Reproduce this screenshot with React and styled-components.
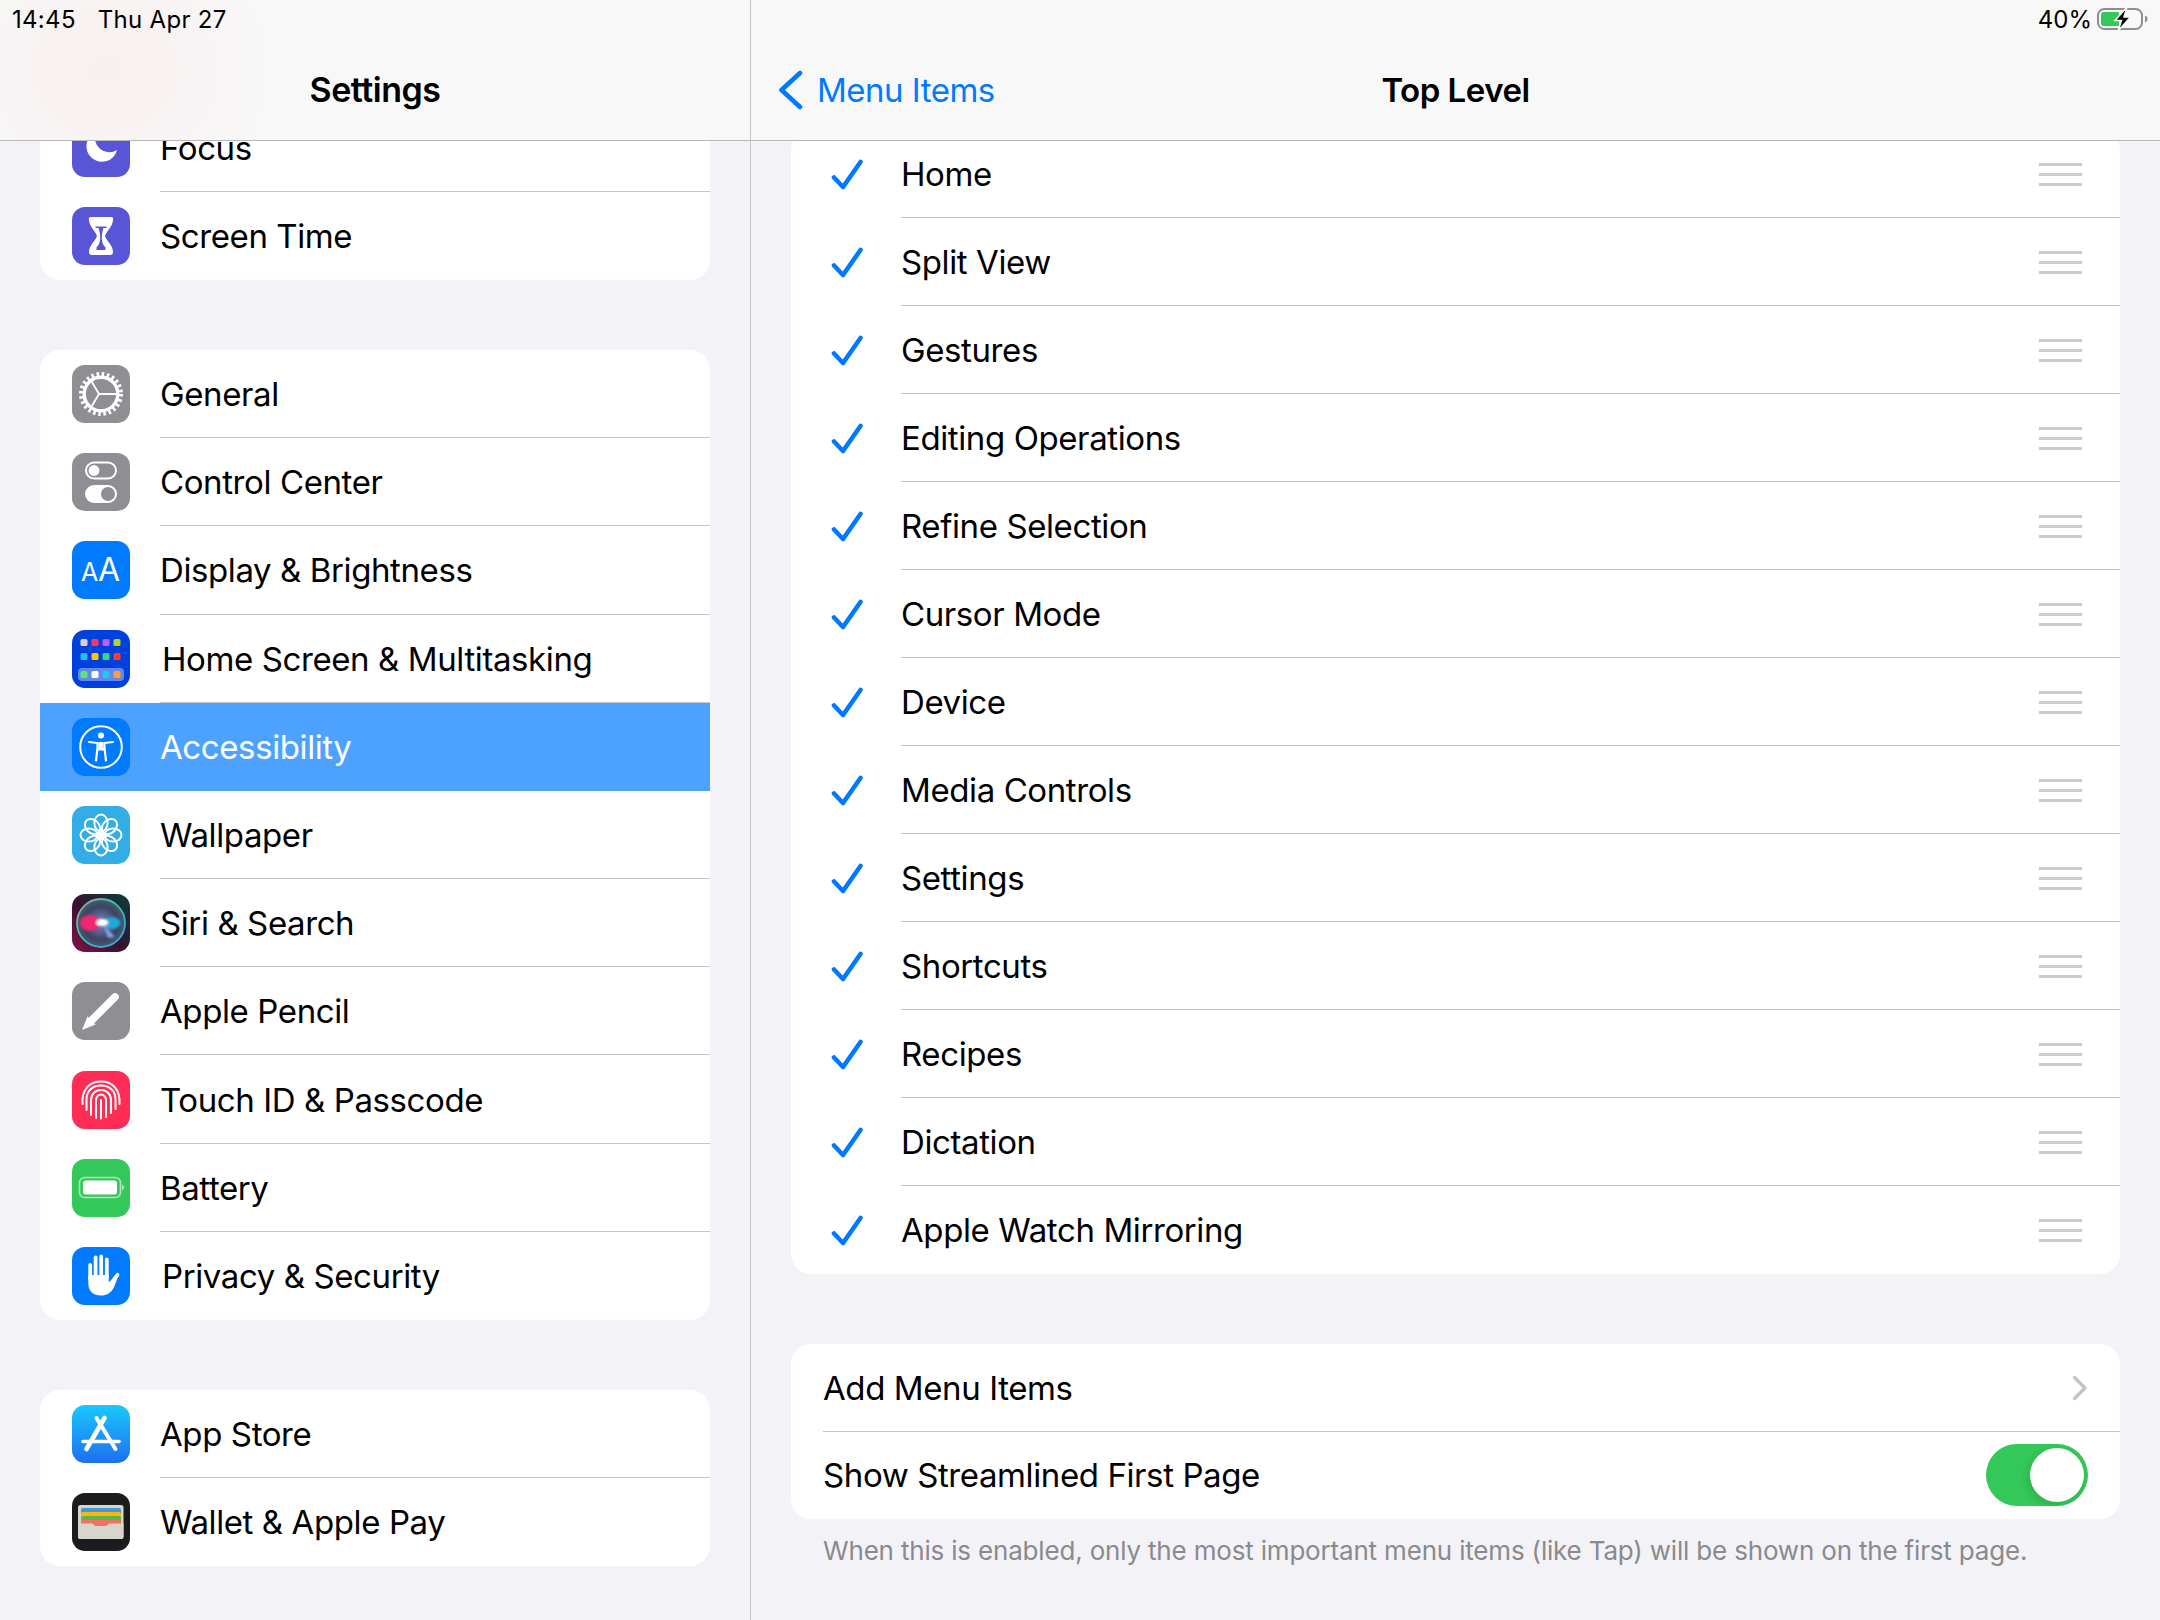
import React from 'react'
import styled, {createGlobalStyle} from 'styled-components';

const BLUE = '#007aff';
const GRAY_TILE = '#8e8e93';

const Dot = ({x, y, color}) => <rect x={x} y={y} width="7" height="7" rx="1.6" fill={color}/>;

const HOME_DOTS = [
    ['#d8d4c8', '#ff375f', '#bf5af2', '#b5d334'],
    ['#1fc0f5', '#ffc400', '#30d98f', '#ff3b30'],
    ['#5ce66d', '#ffffff', '#20c8f5', '#ff9f38'],
];
const HOME_DOT_ROWS = [9, 23, 41];
const DOT_COLUMNS = [8.5, 19.5, 30.5, 41.5];
const PETALS = [0, 45, 90, 135, 180, 225, 270, 315];

const ICONS = {
    focus: {
        bg: '#5856d6',
        art: <path d="M24 13A15.5 15.5 0 1 0 45 31A14.5 14.5 0 0 1 24 13Z" fill="#fff"/>,
    },
    screenTime: {
        bg: '#5856d6',
        art: (
            <>
                <path d="M19 10H39C41 10 41.5 11 41 13C40.5 20 34.5 24 33 29C34.5 34 41 38 41 45C41 47 40 48 38 48H20C18 48 17 47 17 45C17 38 23.5 34 25 29C23.5 24 17.5 20 17 13C16.5 11 17 10 19 10Z" fill="#fff"/>
                <path d="M23.5 19.5H34.5V21H31.5C30.5 24 29.8 27 29.8 31C29.8 35 31 38 33.5 40.5V43H24.5V40.5C27 38 28.2 35 28.2 31C28.2 27 27.5 24 26.5 21H23.5Z" fill="#5856d6"/>
            </>
        ),
    },
    general: {
        bg: GRAY_TILE,
        art: (
            <g fill="none" stroke="#fff">
                <circle cx="29" cy="29" r="20" strokeWidth="4" strokeDasharray="2.6 2.64"/>
                <circle cx="29" cy="29" r="16.8" strokeWidth="3.4"/>
                <path d="M27 29H45M27 29L19 15.5M27 29L19 42.5" strokeWidth="1.8"/>
            </g>
        ),
    },
    control: {
        bg: GRAY_TILE,
        art: (
            <>
                <rect x="14" y="9.5" width="30" height="16" rx="8" fill="none" stroke="#fff" strokeWidth="2"/>
                <circle cx="22" cy="17.5" r="5.4" fill="#fff"/>
                <rect x="13" y="32" width="32" height="18" rx="9" fill="#fff"/>
                <circle cx="36" cy="41" r="7" fill={GRAY_TILE}/>
            </>
        ),
    },
    display: {
        bg: BLUE,
        art: (
            <g fill="#fff" fontFamily="Inter, sans-serif">
                <text x="9" y="40" fontSize="25">A</text>
                <text x="26" y="40" fontSize="32">A</text>
            </g>
        ),
    },
    home: {
        bg: '#0040dd',
        art: (
            <>
                <rect x="6" y="38" width="46" height="13" rx="4" fill="#fff" opacity="0.38"/>
                {HOME_DOTS.map((row, rowIndex) => row.map((color, colIndex) => (
                    <Dot key={`${rowIndex}-${colIndex}`} x={DOT_COLUMNS[colIndex]} y={HOME_DOT_ROWS[rowIndex]} color={color}/>
                )))}
            </>
        ),
    },
    accessibility: {
        bg: BLUE,
        art: (
            <g fill="none" stroke="#fff">
                <circle cx="29" cy="29" r="20.8" strokeWidth="2"/>
                <circle cx="29" cy="17.5" r="3" fill="#fff" stroke="none"/>
                <path d="M17 24L25.5 25V30L24 42.5M41 24L32.5 25V30L34 42.5M25.5 31.5H32.5" strokeWidth="2.2" strokeLinecap="round" strokeLinejoin="round"/>
                <path d="M26.5 24H31.5V32H26.5Z" fill="#fff" stroke="none"/>
            </g>
        ),
    },
    wallpaper: {
        bg: '#32ade6',
        art: (
            <g fill="none" stroke="#fff" strokeWidth="2">
                {PETALS.map(angle => (
                    <ellipse key={angle} cx="29" cy="17" rx="6.6" ry="8.5" transform={`rotate(${angle} 29 29)`}/>
                ))}
                <circle cx="29" cy="29" r="3" fill="#fff" stroke="none"/>
            </g>
        ),
    },
    siri: {
        bg: 'linear-gradient(45deg, #8a1048 0%, #3a1030 45%, #0b3d3c 100%)',
        art: (
            <>
                <defs>
                    <linearGradient id="siriRing" x1="0" y1="0" x2="1" y2="1">
                        <stop offset="0" stopColor="#a9a0a8"/>
                        <stop offset="0.4" stopColor="#35c79a"/>
                        <stop offset="1" stopColor="#2f9df4"/>
                    </linearGradient>
                    <radialGradient id="siriOrb" cx="0.5" cy="0.5" r="0.5">
                        <stop offset="0" stopColor="#7a86c8"/>
                        <stop offset="0.7" stopColor="#3a4560"/>
                        <stop offset="1" stopColor="#4a5a70"/>
                    </radialGradient>
                    <filter id="siriBlur" x="-30%" y="-30%" width="160%" height="160%">
                        <feGaussianBlur stdDeviation="1.2"/>
                    </filter>
                </defs>
                <circle cx="29" cy="29" r="24" fill="url(#siriOrb)" stroke="url(#siriRing)" strokeWidth="1.8"/>
                <g filter="url(#siriBlur)">
                    <ellipse cx="18" cy="29" rx="10" ry="8" fill="#f0266e"/>
                    <ellipse cx="40" cy="29" rx="8.500" ry="6" fill="#20a8d8"/>
                    <path d="M31 30L43 43L36 44Z" fill="#7fa0e0"/>
                    <ellipse cx="30" cy="28.500" rx="6" ry="3.600" fill="#fff"/>
                </g>
                <circle cx="30.500" cy="28.500" r="2.400" fill="#fff"/>
            </>
        ),
    },
    pencil: {
        bg: GRAY_TILE,
        art: (
            <>
                <path d="M19.5 38.5L43 15" stroke="#fff" strokeWidth="7.6" strokeLinecap="round"/>
                <path d="M15.5 34.5L23.5 42.5L10 48Z" fill="#fff"/>
            </>
        ),
    },
    touch: {
        bg: '#ff2d55',
        art: (
            <g fill="none" stroke="#fff" strokeWidth="2" strokeLinecap="round">
                <path d="M10.5 33C9.5 18 18 10.5 29 10.5C40 10.5 48.5 18 47.5 33"/>
                <path d="M14.5 39V28C14.5 20 20.5 14.5 29 14.5C37.5 14.5 43.5 20 43.5 28V38"/>
                <path d="M19 44V29C19 23 23.5 19 29 19C34.5 19 39 23 39 29V42"/>
                <path d="M24 47V29C24 26 26.3 23.5 29 23.5C31.7 23.5 34 26 34 29V46"/>
                <path d="M29 29V47.5"/>
            </g>
        ),
    },
    battery: {
        bg: '#34c759',
        art: (
            <>
                <rect x="7.5" y="18.5" width="41" height="20" rx="5" fill="none" stroke="#fff" strokeOpacity="0.6" strokeWidth="1.6"/>
                <rect x="11" y="21.5" width="34" height="14" rx="2.5" fill="#fff"/>
                <path d="M50 25L52.5 28.5L50 32Z" fill="#fff" opacity="0.6"/>
            </>
        ),
    },
    privacy: {
        bg: BLUE,
        art: (
            <>
                <g stroke="#fff" strokeWidth="3.8" strokeLinecap="round">
                    <path d="M18.2 18V32M23.6 10.5V30M29.2 9.5V30M34.8 12.5V30"/>
                    <path d="M38.5 37L45.5 27.8"/>
                </g>
                <path d="M16.3 28H36.7V34L39.5 36.5L46 29C43 38 41 48.5 29 48.5C20 48.5 16.3 43 16.3 36Z" fill="#fff"/>
            </>
        ),
    },
    appStore: {
        bg: 'linear-gradient(180deg, #1ac8fc 0%, #1d6ff2 100%)',
        art: (
            <g stroke="#fff" strokeLinecap="round" fill="none">
                <path d="M32.5 13L14.5 44" strokeWidth="4.6"/>
                <path d="M24.5 13L43.5 44" strokeWidth="4"/>
                <path d="M11 36.5H47" strokeWidth="3.6"/>
            </g>
        ),
    },
    wallet: {
        bg: '#1c1c1e',
        art: (
            <>
                <rect x="6" y="12" width="45.5" height="34" rx="2.5" fill="#d8d6cc"/>
                <rect x="9" y="15" width="40" height="10" rx="2" fill="#3f9ad6"/>
                <rect x="9" y="19" width="40" height="10" rx="2" fill="#ffb40f"/>
                <rect x="9" y="23" width="40" height="10" rx="2" fill="#54b948"/>
                <rect x="9" y="27" width="40" height="6" rx="2" fill="#f47064"/>
                <path d="M6 30.5H19C23 30.5 23 36 28.75 36C34.5 36 34.5 30.5 38.5 30.5H51.5V43.5C51.5 45 50.5 46 49 46H8.5C7 46 6 45 6 43.5Z" fill="#d8d6cc"/>
            </>
        ),
    },
};

const TOP_GROUP = [
    {label: 'Focus', icon: 'focus'},
    {label: 'Screen Time', icon: 'screenTime'},
];
const MIDDLE_GROUP = [
    {label: 'General', icon: 'general'},
    {label: 'Control Center', icon: 'control'},
    {label: 'Display & Brightness', icon: 'display'},
    {label: 'Home Screen & Multitasking', icon: 'home', shifted: true},
    {label: 'Accessibility', icon: 'accessibility', selected: true},
    {label: 'Wallpaper', icon: 'wallpaper'},
    {label: 'Siri & Search', icon: 'siri'},
    {label: 'Apple Pencil', icon: 'pencil'},
    {label: 'Touch ID & Passcode', icon: 'touch'},
    {label: 'Battery', icon: 'battery'},
    {label: 'Privacy & Security', icon: 'privacy', shifted: true},
];
const BOTTOM_GROUP = [
    {label: 'App Store', icon: 'appStore'},
    {label: 'Wallet & Apple Pay', icon: 'wallet'},
];
const MENU_ITEMS = [
    'Home', 'Split View', 'Gestures', 'Editing Operations', 'Refine Selection', 'Cursor Mode', 'Device',
    'Media Controls', 'Settings', 'Shortcuts', 'Recipes', 'Dictation', 'Apple Watch Mirroring',
];

function SettingsGroup({items}) {
    return (
        <Card>
            {items.map((item, index) => (
                <SideRow key={item.label} $selected={item.selected}>
                    <IconTile $bg={ICONS[item.icon].bg}>
                        <svg width="58" height="58" viewBox="0 0 58 58">{ICONS[item.icon].art}</svg>
                    </IconTile>
                    <SideRowBody $last={index === items.length - 1} $selected={item.selected}>
                        <RowLabel $selected={item.selected} $shifted={item.shifted}>{item.label}</RowLabel>
                    </SideRowBody>
                </SideRow>
            ))}
        </Card>
    );
}

function BatteryIcon() {
    return (
        <svg width="54" height="26" viewBox="0 0 54 26">
            <rect x="1" y="3" width="44" height="20" rx="6.5" fill="none" stroke="#8e8e8e" strokeWidth="2"/>
            <path d="M4 8.5C4 7 5 6 6.5 6H22V20H6.5C5 20 4 19 4 17.5Z" fill="#34c759"/>
            <path d="M48 9.5C50 10.5 50.5 11.5 50.5 13C50.5 14.5 50 15.5 48 16.5Z" fill="#8e8e8e"/>
            <path d="M30 1L18 14.5H24.5L21 25L33.5 11H27Z" fill="#000" stroke="#f8f8f8" strokeWidth="1.5"/>
        </svg>
    );
}

function App() {
    return (
        <Page>
            <GlobalStyle/>
            <Sidebar>
                <SidebarHeader>
                    <StatusBar>
                        <StatusTime>14:45</StatusTime>
                        <StatusTime>Thu Apr 27</StatusTime>
                    </StatusBar>
                    <SidebarTitle>Settings</SidebarTitle>
                </SidebarHeader>
                <SidebarScroll>
                    <SettingsGroup items={TOP_GROUP}/>
                    <SettingsGroup items={MIDDLE_GROUP}/>
                    <SettingsGroup items={BOTTOM_GROUP}/>
                </SidebarScroll>
            </Sidebar>
            <Detail>
                <DetailHeader>
                    <StatusBarRight>
                        <StatusPercent>40%</StatusPercent>
                        <BatteryIcon/>
                    </StatusBarRight>
                    <NavBar>
                        <BackLink>
                            <svg width="26" height="40" viewBox="0 0 26 40">
                                <path d="M22 3L3.5 20L22 37" fill="none" stroke={BLUE} strokeWidth="4.6" strokeLinecap="round" strokeLinejoin="round"/>
                            </svg>
                            <BackLabel>Menu Items</BackLabel>
                        </BackLink>
                        <NavTitle>Top Level</NavTitle>
                        <span/>
                    </NavBar>
                </DetailHeader>
                <DetailScroll>
                    <ItemsCard>
                        {MENU_ITEMS.map((item, index) => (
                            <MenuRow key={item}>
                                <CheckCell>
                                    <svg width="32" height="31" viewBox="0 0 32 31">
                                        <path d="M3 18.5L12 28L29.5 3" fill="none" stroke={BLUE} strokeWidth="4.6" strokeLinecap="round" strokeLinejoin="round"/>
                                    </svg>
                                </CheckCell>
                                <MenuRowBody $last={index === MENU_ITEMS.length - 1}>
                                    <RowLabel>{item}</RowLabel>
                                    <DragHandle>
                                        <span/><span/><span/>
                                    </DragHandle>
                                </MenuRowBody>
                            </MenuRow>
                        ))}
                    </ItemsCard>
                    <OptionsCard>
                        <OptionRow $divided>
                            <RowLabel>Add Menu Items</RowLabel>
                            <svg width="16" height="26" viewBox="0 0 16 26">
                                <path d="M2.5 2.5L13 13L2.5 23.5" fill="none" stroke="#c4c4c6" strokeWidth="3.4" strokeLinecap="round" strokeLinejoin="round"/>
                            </svg>
                        </OptionRow>
                        <OptionRow>
                            <RowLabel>Show Streamlined First Page</RowLabel>
                            <Toggle><ToggleKnob/></Toggle>
                        </OptionRow>
                    </OptionsCard>
                    <FootNote>When this is enabled, only the most important menu items (like Tap) will be shown on the first page.</FootNote>
                </DetailScroll>
            </Detail>
        </Page>
    );
}

export default App;

const GlobalStyle = createGlobalStyle`
  html, body {
    margin: 0;
    padding: 0;
    background: #f2f2f7;
  }
  * {
    box-sizing: border-box;
  }
`;

const Page = styled.div`
  display: flex;
  width: 2160px;
  height: 1620px;
  overflow: hidden;
  background: #f2f2f7;
  color: #000;
  font-family: Inter, "Liberation Sans", sans-serif;
`;

const Sidebar = styled.aside`
  display: flex;
  flex-direction: column;
  width: 751px;
  height: 100%;
  flex-shrink: 0;
  border-right: 1px solid #c6c6c8;
`;

const HeaderBase = styled.header`
  position: relative;
  z-index: 1;
  display: flex;
  flex-direction: column;
  height: 141px;
  flex-shrink: 0;
  border-bottom: 1px solid #b8b8ba;
  background: #f8f8f8;
`;

const SidebarHeader = styled(HeaderBase)`
  background:
    radial-gradient(ellipse 170px 150px at 105px 70px, rgba(255, 120, 130, 0.07), rgba(255, 120, 130, 0) 100%),
    #f8f8f8;
`;

const DetailHeader = styled(HeaderBase)``;

const StatusBar = styled.div`
  display: flex;
  gap: 22px;
  height: 40px;
  padding: 6px 0 0 12px;
`;

const StatusBarRight = styled.div`
  display: flex;
  justify-content: flex-end;
  align-items: flex-start;
  gap: 5px;
  height: 40px;
  padding: 6px 9px 0 0;
`;

const StatusTime = styled.span`
  font-size: 24px;
  line-height: 28px;
  letter-spacing: 0.3px;
`;

const StatusPercent = styled.span`
  font-size: 24px;
  line-height: 28px;
`;

const SidebarTitle = styled.h1`
  margin: 0;
  font-size: 34px;
  font-weight: 600;
  line-height: 100px;
  height: 100px;
  text-align: center;
  letter-spacing: -0.5px;
`;

const NavBar = styled.div`
  display: grid;
  grid-template-columns: 1fr auto 1fr;
  align-items: center;
  height: 100px;
  padding: 0 27px;
`;

const BackLink = styled.div`
  display: flex;
  align-items: center;
  gap: 13px;
`;

const BackLabel = styled.span`
  font-size: 33px;
  color: ${BLUE};
  letter-spacing: -0.5px;
`;

const NavTitle = styled.h2`
  margin: 0;
  font-size: 33px;
  font-weight: 600;
  letter-spacing: -0.5px;
`;

const SidebarScroll = styled.div`
  display: flex;
  flex-direction: column;
  gap: 69.6px;
  flex: 1;
  min-height: 0;
  overflow: hidden;
  margin-top: -1px;
  padding: 0 40px;

  & > :first-child {
    margin-top: -36px;
  }
`;

const Card = styled.section`
  flex-shrink: 0;
  background: #fff;
  border-radius: 20px;
  overflow: hidden;
`;

const SideRow = styled.div`
  display: flex;
  align-items: center;
  height: 88.2px;
  padding-left: 32px;
  background: ${props => props.$selected ? '#4da2ff' : 'transparent'};
`;

const IconTile = styled.div`
  display: flex;
  width: 58px;
  height: 58px;
  flex-shrink: 0;
  margin-right: 30px;
  border-radius: 13px;
  overflow: hidden;
  background: ${props => props.$bg};
`;

const SideRowBody = styled.div`
  display: flex;
  align-items: center;
  flex: 1;
  height: 100%;
  padding-top: 1px;
  border-bottom: 1px solid ${props => props.$last || props.$selected ? 'transparent' : '#c6c6c8'};
`;

const RowLabel = styled.span`
  font-size: 33px;
  letter-spacing: -0.4px;
  color: ${props => props.$selected ? '#fff' : '#000'};
  padding-left: ${props => props.$shifted ? '2px' : '0'};
`;

const Detail = styled.main`
  display: flex;
  flex-direction: column;
  flex: 1;
  min-width: 0;
`;

const DetailScroll = styled.div`
  display: flex;
  flex-direction: column;
  flex: 1;
  min-height: 0;
  overflow: hidden;
  padding: 0 40px;
`;

const ItemsCard = styled(Card)`
  margin-top: -11px;
`;

const MenuRow = styled.div`
  display: flex;
  height: 88px;
`;

const CheckCell = styled.div`
  display: flex;
  align-items: center;
  width: 110px;
  flex-shrink: 0;
  padding-left: 40px;
`;

const MenuRowBody = styled.div`
  display: flex;
  align-items: center;
  justify-content: space-between;
  flex: 1;
  padding: 1px 38px 0 0;
  border-bottom: 1px solid ${props => props.$last ? 'transparent' : '#c6c6c8'};
`;

const DragHandle = styled.div`
  display: flex;
  flex-direction: column;
  gap: 7px;
  width: 43px;

  span {
    display: block;
    height: 3px;
    background: #cbcbcd;
  }
`;

const OptionsCard = styled(Card)`
  margin-top: 70px;
`;

const OptionRow = styled.div`
  display: flex;
  align-items: center;
  justify-content: space-between;
  height: 87.5px;
  margin-left: 32px;
  padding: 1px 32px 0 0;
  border-bottom: 1px solid ${props => props.$divided ? '#c6c6c8' : 'transparent'};
`;

const Toggle = styled.div`
  display: flex;
  justify-content: flex-end;
  align-items: center;
  width: 102px;
  height: 62px;
  padding-right: 4px;
  border-radius: 31px;
  background: #34c759;
`;

const ToggleKnob = styled.div`
  width: 54px;
  height: 54px;
  border-radius: 50%;
  background: #fff;
  box-shadow: -2px 3px 8px rgba(0, 0, 0, 0.12);
`;

const FootNote = styled.p`
  margin: 14px 0 0 32px;
  font-size: 26px;
  line-height: 36px;
  color: #8a8a8e;
  letter-spacing: -0.18px;
  white-space: nowrap;
`;
